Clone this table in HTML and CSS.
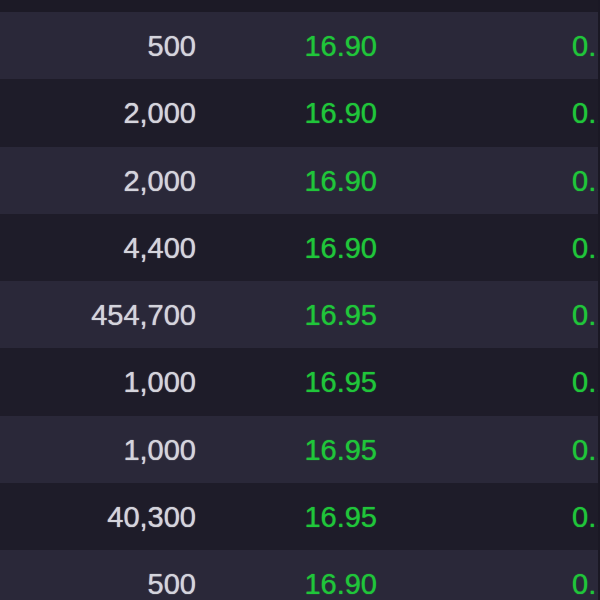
FILE: index.html
```html
<!DOCTYPE html>
<html lang="en">
<head>
  <meta charset="UTF-8" />
  <title>Trades</title>
  <link rel="stylesheet" href="styles.css">
</head>
<body>
  <div class="trades">
    <div class="trades-head"></div>
    <div class="row"><span class="vol">500</span><span class="price">16.90</span><span class="chg">0.12</span></div>
    <div class="row"><span class="vol">2,000</span><span class="price">16.90</span><span class="chg">0.12</span></div>
    <div class="row"><span class="vol">2,000</span><span class="price">16.90</span><span class="chg">0.12</span></div>
    <div class="row"><span class="vol">4,400</span><span class="price">16.90</span><span class="chg">0.12</span></div>
    <div class="row"><span class="vol">454,700</span><span class="price">16.95</span><span class="chg">0.17</span></div>
    <div class="row"><span class="vol">1,000</span><span class="price">16.95</span><span class="chg">0.17</span></div>
    <div class="row"><span class="vol">1,000</span><span class="price">16.95</span><span class="chg">0.17</span></div>
    <div class="row"><span class="vol">40,300</span><span class="price">16.95</span><span class="chg">0.17</span></div>
    <div class="row"><span class="vol">500</span><span class="price">16.90</span><span class="chg">0.12</span></div>
  </div>
</body>
</html>
```

FILE: styles.css
```css
:root {
  --row-light: #2a2839;
  --row-dark: #1e1c29;
  --text: #d4d4dc;
  --green: #20c53a;
}
* { box-sizing: border-box; }
body {
  margin: 0;
  background: var(--row-dark);
  font-family: 'Liberation Sans', Arial, sans-serif;
}
.trades {
  width: 600px;
  height: 600px;
  overflow: hidden;
  border-right: 2px solid #1a1824;
}
.trades-head {
  height: 12px;
  background: #1c1a26;
}
.row {
  display: grid;
  grid-template-columns: 196px 181px 1fr;
  align-items: center;
  height: 67.25px;
  padding-top: 2px;
  font-size: 29px;
  text-shadow: 0 0 1px currentColor; /* thicker, slightly soft digits */
  background: var(--row-light);
}
.row:nth-child(odd) { background: var(--row-dark); }
.vol {
  text-align: right;
  color: var(--text);
}
.price {
  text-align: right;
  color: var(--green);
}
.chg {
  padding-left: 195px;
  color: var(--green);
  white-space: nowrap;
}
```
